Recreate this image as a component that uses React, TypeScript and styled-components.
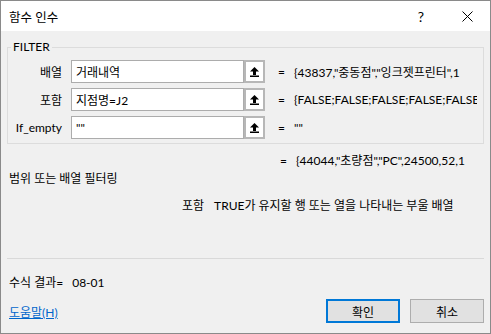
import React from "react";
import styled, { createGlobalStyle } from "styled-components";

const GlobalStyle = createGlobalStyle`
  html, body {
    margin: 0;
    padding: 0;
    background: #ffffff;
  }

  body {
    font-family: Lato, "Noto Sans CJK KR", sans-serif;
    font-size: 12px;
    color: #000000;
  }
`;

const Window = styled.div`
  width: 491px;
  height: 334px;
  box-sizing: border-box;
  border: 1px solid #8a8a8a;
  background: #f0f0f0;
  display: flex;
  flex-direction: column;
`;

const TitleBar = styled.div`
  height: 30px;
  background: #ffffff;
  display: flex;
  align-items: center;
`;

const Title = styled.div`
  flex: 1;
  padding-left: 8px;
  font-size: 12.5px;
`;

const TitleButton = styled.div`
  width: 46px;
  height: 30px;
  display: flex;
  align-items: center;
  justify-content: center;
  font-size: 14px;
`;

const Body = styled.div`
  flex: 1;
  padding: 0 6px;
  display: flex;
  flex-direction: column;
`;

const Group = styled.fieldset`
  margin: 9px 0 0;
  padding: 6px 6px 4px 0;
  border: 1px solid #dcdcdc;
  min-width: 0;
`;

const Legend = styled.legend`
  margin-left: 3px;
  padding: 0 2px;
  line-height: 14px;
`;

const Rows = styled.div`
  display: flex;
  flex-direction: column;
  gap: 5px;
`;

const Row = styled.div`
  display: flex;
  align-items: center;
  height: 23px;
`;

const ArgName = styled.div`
  width: 54px;
  text-align: right;
  flex-shrink: 0;
`;

const RefInput = styled.div`
  margin-left: 9px;
  width: 173px;
  height: 23px;
  box-sizing: border-box;
  border: 1px solid #acacac;
  background: #ffffff;
  padding-left: 4px;
  display: flex;
  align-items: center;
  flex-shrink: 0;
`;

const CollapseButton = styled.div`
  width: 21px;
  height: 23px;
  box-sizing: border-box;
  border: 2px solid #b7b7b7;
  background: #ffffff;
  display: flex;
  align-items: center;
  justify-content: center;
  flex-shrink: 0;
`;

const Equals = styled.span<{ $offset: number }>`
  margin-left: ${(p) => p.$offset}px;
  flex-shrink: 0;
`;

const Value = styled.div`
  margin-left: 9px;
  flex: 1;
  min-width: 0;
  overflow: hidden;
  white-space: nowrap;
`;

const ResultRow = styled.div`
  margin-top: 10px;
  display: flex;
  line-height: 14px;
  padding-left: 273px;
`;

const Text = styled.div<{ $top: number }>`
  margin-top: ${(p) => p.$top}px;
  padding-left: 2px;
  line-height: 14px;
  white-space: nowrap;
`;

const ArgHelp = styled.div`
  margin-top: 13px;
  padding-left: 175px;
  display: flex;
  line-height: 14px;
  white-space: nowrap;
`;

const ArgHelpName = styled.span`
  margin-right: 10px;
`;

const Separator = styled.div`
  margin-top: 45px;
  height: 1px;
  background: #d9d9d9;
`;

const ResultValue = styled.span`
  margin-left: 9px;
`;

const Footer = styled.div`
  margin-top: 9px;
  display: flex;
  align-items: center;
`;

const HelpLink = styled.a`
  flex: 1;
  padding-left: 2px;
  color: #0066cc;
  text-decoration: underline;
`;

const DialogButton = styled.button<{ $primary?: boolean }>`
  width: 74px;
  height: 24px;
  margin-left: ${(p) => (p.$primary ? 0 : 10)}px;
  box-sizing: border-box;
  border: ${(p) => (p.$primary ? "2px solid #0078d7" : "1px solid #adadad")};
  background: #e1e1e1;
  font-family: inherit;
  font-size: 12px;
  color: #000000;
  padding: 0;
`;

const UploadIcon = () => (
  <svg width="9" height="10" viewBox="0 0 9 10">
    <polygon points="4.5,0 0,4.5 9,4.5" fill="#000" />
    <rect x="3" y="4" width="3" height="4" fill="#000" />
    <rect x="0" y="8.5" width="9" height="1.5" fill="#000" />
  </svg>
);

const CloseIcon = () => (
  <svg width="11" height="11" viewBox="0 0 11 11">
    <path d="M0.5 0.5 L10.5 10.5 M10.5 0.5 L0.5 10.5" stroke="#000" strokeWidth="1" />
  </svg>
);

const args = [
  { name: "배열", ref: "거래내역", value: '{43837,"중동점","잉크젯프린터",1' },
  { name: "포함", ref: "지점명=J2", value: "{FALSE;FALSE;FALSE;FALSE;FALSE" },
  { name: "If_empty", ref: '""', value: '""' },
];

const App = () => {
  return (
    <Window>
      <GlobalStyle />
      <TitleBar>
        <Title>함수 인수</Title>
        <TitleButton>?</TitleButton>
        <TitleButton>
          <CloseIcon />
        </TitleButton>
      </TitleBar>
      <Body>
        <Group>
          <Legend>FILTER</Legend>
          <Rows>
            {args.map((a) => (
              <Row key={a.name}>
                <ArgName>{a.name}</ArgName>
                <RefInput>{a.ref}</RefInput>
                <CollapseButton>
                  <UploadIcon />
                </CollapseButton>
                <Equals $offset={13}>=</Equals>
                <Value>{a.value}</Value>
              </Row>
            ))}
          </Rows>
        </Group>
        <ResultRow>
          <span>=</span>
          <Value>{'{44044,"초량점","PC",24500,52,1'}</Value>
        </ResultRow>
        <Text $top={4}>범위 또는 배열 필터링</Text>
        <ArgHelp>
          <ArgHelpName>포함</ArgHelpName>
          <span>TRUE가 유지할 행 또는 열을 나타내는 부울 배열</span>
        </ArgHelp>
        <Separator />
        <Text $top={17}>
          수식 결과=
          <ResultValue>08-01</ResultValue>
        </Text>
        <Footer>
          <HelpLink>도움말(H)</HelpLink>
          <DialogButton $primary>확인</DialogButton>
          <DialogButton>취소</DialogButton>
        </Footer>
      </Body>
    </Window>
  );
};

export default App;
